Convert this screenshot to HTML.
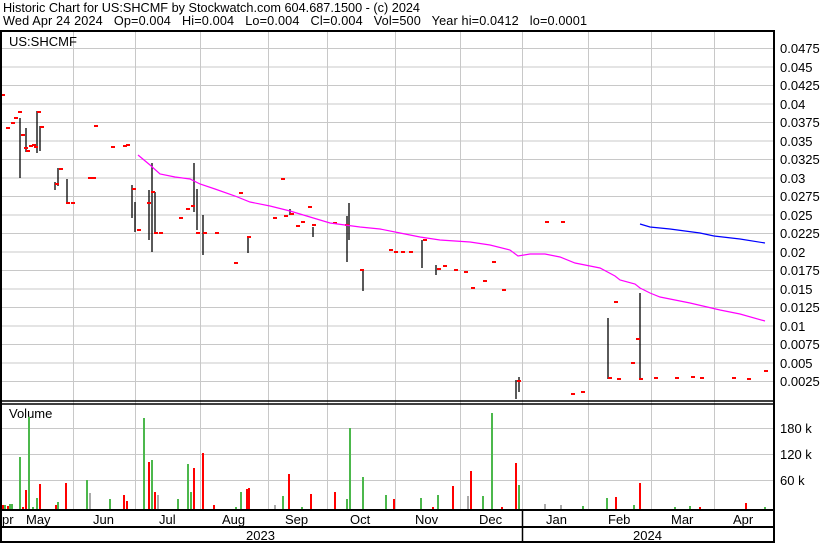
<!DOCTYPE html>
<html><head><meta charset="utf-8"><style>
html,body{margin:0;padding:0;background:#fff;width:830px;height:543px;overflow:hidden}
svg{display:block;font-family:"Liberation Sans",sans-serif}
.pre{white-space:pre}
</style></head><body>
<svg width="830" height="543" viewBox="0 0 830 543" xmlns="http://www.w3.org/2000/svg">
<rect width="830" height="543" fill="#fff"/>
<text x="3" y="12" font-size="12.7" textLength="417" lengthAdjust="spacingAndGlyphs">Historic Chart for US:SHCMF by Stockwatch.com 604.687.1500 - (c) 2024</text>
<text x="3" y="25" font-size="12.7" class="pre" xml:space="preserve" textLength="584" lengthAdjust="spacing">Wed Apr 24 2024   Op=0.004   Hi=0.004   Lo=0.004   Cl=0.004   Vol=500   Year hi=0.0412   lo=0.0001</text>
<g stroke="#c8c8c8" stroke-width="1">
<line x1="73.5" y1="31" x2="73.5" y2="509"/><line x1="135.5" y1="31" x2="135.5" y2="509"/>
<line x1="200.5" y1="31" x2="200.5" y2="509"/><line x1="268.5" y1="31" x2="268.5" y2="509"/>
<line x1="327.5" y1="31" x2="327.5" y2="509"/><line x1="395.5" y1="31" x2="395.5" y2="509"/>
<line x1="460.5" y1="31" x2="460.5" y2="509"/><line x1="522.5" y1="31" x2="522.5" y2="509"/>
<line x1="588.5" y1="31" x2="588.5" y2="509"/><line x1="651.5" y1="31" x2="651.5" y2="509"/>
<line x1="714.5" y1="31" x2="714.5" y2="509"/>
<line x1="0" x2="774" y1="48.5" y2="48.5"/><line x1="0" x2="774" y1="67" y2="67"/><line x1="0" x2="774" y1="85.5" y2="85.5"/><line x1="0" x2="774" y1="104" y2="104"/><line x1="0" x2="774" y1="122.5" y2="122.5"/><line x1="0" x2="774" y1="141" y2="141"/><line x1="0" x2="774" y1="159.5" y2="159.5"/><line x1="0" x2="774" y1="178" y2="178"/><line x1="0" x2="774" y1="196.5" y2="196.5"/><line x1="0" x2="774" y1="215" y2="215"/><line x1="0" x2="774" y1="233.5" y2="233.5"/><line x1="0" x2="774" y1="252" y2="252"/><line x1="0" x2="774" y1="270.5" y2="270.5"/><line x1="0" x2="774" y1="289" y2="289"/><line x1="0" x2="774" y1="307.5" y2="307.5"/><line x1="0" x2="774" y1="326" y2="326"/><line x1="0" x2="774" y1="344.5" y2="344.5"/><line x1="0" x2="774" y1="363" y2="363"/><line x1="0" x2="774" y1="381.5" y2="381.5"/>
<line x1="0" x2="774" y1="428.5" y2="428.5"/><line x1="0" x2="774" y1="454.5" y2="454.5"/><line x1="0" x2="774" y1="480.5" y2="480.5"/>
</g>
<rect x="2" y="33" width="70" height="15" fill="#fff"/>
<rect x="2" y="405" width="55" height="15" fill="#fff"/>
<text x="9" y="46" font-size="13">US:SHCMF</text>
<text x="9" y="418" font-size="13">Volume</text>
<g font-size="13">
<text x="780" y="53">0.0475</text><text x="780" y="72">0.045</text><text x="780" y="90">0.0425</text><text x="780" y="109">0.04</text><text x="780" y="127">0.0375</text><text x="780" y="146">0.035</text><text x="780" y="164">0.0325</text><text x="780" y="183">0.03</text><text x="780" y="201">0.0275</text><text x="780" y="220">0.025</text><text x="780" y="238">0.0225</text><text x="780" y="257">0.02</text><text x="780" y="275">0.0175</text><text x="780" y="294">0.015</text><text x="780" y="312">0.0125</text><text x="780" y="331">0.01</text><text x="780" y="349">0.0075</text><text x="780" y="368">0.005</text><text x="780" y="386">0.0025</text>
<text x="780" y="433">180 k</text><text x="780" y="459">120 k</text><text x="780" y="485">60 k</text>
</g>
<g stroke="#000" stroke-width="1.3">
<line x1="20" y1="118" x2="20" y2="178"/><line x1="26" y1="128" x2="26" y2="152"/><line x1="37" y1="111" x2="37" y2="153"/><line x1="40" y1="126" x2="40" y2="151"/><line x1="55" y1="182" x2="55" y2="190"/><line x1="58" y1="168" x2="58" y2="186"/><line x1="67" y1="179" x2="67" y2="204"/><line x1="132" y1="185" x2="132" y2="218"/><line x1="135" y1="202" x2="135" y2="232"/><line x1="149" y1="190" x2="149" y2="240"/><line x1="152" y1="163" x2="152" y2="252"/><line x1="155" y1="192" x2="155" y2="232"/><line x1="194" y1="163" x2="194" y2="212"/><line x1="197" y1="189" x2="197" y2="230"/><line x1="203" y1="215" x2="203" y2="255"/><line x1="248" y1="237" x2="248" y2="253"/><line x1="290" y1="209" x2="290" y2="215"/><line x1="313" y1="227" x2="313" y2="237"/><line x1="347" y1="216" x2="347" y2="262"/><line x1="349" y1="203" x2="349" y2="240"/><line x1="363" y1="269" x2="363" y2="291"/><line x1="422" y1="240" x2="422" y2="268"/><line x1="436" y1="265" x2="436" y2="275"/><line x1="516" y1="380" x2="516" y2="399"/><line x1="519" y1="377" x2="519" y2="392"/><line x1="608" y1="318" x2="608" y2="379"/><line x1="640" y1="293" x2="640" y2="379"/>
</g>
<g fill="#f00">
<rect x="1" y="94" width="4" height="2"/><rect x="6" y="127" width="4" height="2"/><rect x="11" y="122" width="4" height="2"/><rect x="14" y="117" width="4" height="2"/><rect x="18" y="111" width="4" height="2"/><rect x="21" y="134" width="4" height="2"/><rect x="24" y="147" width="4" height="2"/><rect x="26" y="150" width="4" height="2"/><rect x="29" y="145" width="4" height="2"/><rect x="32" y="144" width="4" height="2"/><rect x="34" y="146" width="4" height="2"/><rect x="37" y="111" width="4" height="2"/><rect x="40" y="126" width="4" height="2"/><rect x="55" y="183" width="4" height="2"/><rect x="59" y="168" width="4" height="2"/><rect x="66" y="202" width="4" height="2"/><rect x="71" y="202" width="4" height="2"/><rect x="88" y="177" width="4" height="2"/><rect x="92" y="177" width="4" height="2"/><rect x="94" y="125" width="4" height="2"/><rect x="111" y="146" width="4" height="2"/><rect x="123" y="145" width="4" height="2"/><rect x="126" y="144" width="4" height="2"/><rect x="132" y="188" width="4" height="2"/><rect x="137" y="229" width="4" height="2"/><rect x="147" y="202" width="4" height="2"/><rect x="151" y="191" width="4" height="2"/><rect x="154" y="232" width="4" height="2"/><rect x="159" y="232" width="4" height="2"/><rect x="179" y="217" width="4" height="2"/><rect x="186" y="208" width="4" height="2"/><rect x="191" y="205" width="4" height="2"/><rect x="196" y="232" width="4" height="2"/><rect x="203" y="232" width="4" height="2"/><rect x="215" y="232" width="4" height="2"/><rect x="234" y="262" width="4" height="2"/><rect x="239" y="192" width="4" height="2"/><rect x="247" y="236" width="4" height="2"/><rect x="273" y="217" width="4" height="2"/><rect x="281" y="178" width="4" height="2"/><rect x="284" y="215" width="4" height="2"/><rect x="290" y="213" width="4" height="2"/><rect x="296" y="225" width="4" height="2"/><rect x="301" y="221" width="4" height="2"/><rect x="308" y="206" width="4" height="2"/><rect x="312" y="224" width="4" height="2"/><rect x="333" y="222" width="4" height="2"/><rect x="345" y="224" width="4" height="2"/><rect x="360" y="269" width="4" height="2"/><rect x="389" y="249" width="4" height="2"/><rect x="394" y="251" width="4" height="2"/><rect x="401" y="251" width="4" height="2"/><rect x="409" y="251" width="4" height="2"/><rect x="423" y="239" width="4" height="2"/><rect x="437" y="268" width="4" height="2"/><rect x="443" y="265" width="4" height="2"/><rect x="454" y="269" width="4" height="2"/><rect x="464" y="271" width="4" height="2"/><rect x="471" y="287" width="4" height="2"/><rect x="483" y="280" width="4" height="2"/><rect x="492" y="261" width="4" height="2"/><rect x="502" y="289" width="4" height="2"/><rect x="517" y="380" width="4" height="2"/><rect x="545" y="221" width="4" height="2"/><rect x="561" y="221" width="4" height="2"/><rect x="571" y="393" width="4" height="2"/><rect x="581" y="391" width="4" height="2"/><rect x="608" y="377" width="4" height="2"/><rect x="614" y="301" width="4" height="2"/><rect x="617" y="378" width="4" height="2"/><rect x="631" y="362" width="4" height="2"/><rect x="636" y="338" width="4" height="2"/><rect x="639" y="378" width="4" height="2"/><rect x="654" y="377" width="4" height="2"/><rect x="675" y="377" width="4" height="2"/><rect x="691" y="376" width="4" height="2"/><rect x="700" y="377" width="4" height="2"/><rect x="732" y="377" width="4" height="2"/><rect x="747" y="378" width="4" height="2"/><rect x="764" y="370" width="4" height="2"/>
</g>
<polyline fill="none" stroke="#f0f" stroke-width="1.2" points="138,155 150,165 160,174 175,177 190,179 200,184 215,189 235,196 250,202 270,206 290,211 310,217 330,223 360,227 380,229 400,233 420,237 440,240 470,242 490,245 510,250 518,256 530,254 545,254 560,257 575,263 600,268 615,276 620,280 635,284 640,288 650,293 660,297 690,303 720,310 740,314 765,321"/>
<polyline fill="none" stroke="#00f" stroke-width="1.2" points="640,224 650,227 670,229 700,233 714,236 740,239 765,243"/>
<g fill="#f00">
<rect x="2" y="505" width="2" height="4"/><rect x="7" y="506" width="2" height="3"/><rect x="22" y="507" width="2" height="2"/><rect x="25" y="490" width="2" height="19"/><rect x="39" y="484" width="2" height="25"/><rect x="55" y="505" width="2" height="4"/><rect x="65" y="483" width="2" height="26"/><rect x="123" y="495" width="2" height="14"/><rect x="126" y="501" width="2" height="8"/><rect x="148" y="462" width="2" height="47"/><rect x="154" y="492" width="2" height="17"/><rect x="193" y="468" width="2" height="41"/><rect x="202" y="453" width="2" height="56"/><rect x="213" y="505" width="2" height="4"/><rect x="246" y="489" width="2" height="20"/><rect x="248" y="488" width="2" height="21"/><rect x="288" y="474" width="2" height="35"/><rect x="310" y="494" width="2" height="15"/><rect x="334" y="492" width="2" height="17"/><rect x="393" y="499" width="2" height="10"/><rect x="432" y="507" width="2" height="2"/><rect x="452" y="486" width="2" height="23"/><rect x="470" y="471" width="2" height="38"/><rect x="501" y="507" width="2" height="2"/><rect x="515" y="463" width="2" height="46"/><rect x="615" y="497" width="2" height="12"/><rect x="639" y="483" width="2" height="26"/><rect x="699" y="507" width="2" height="2"/><rect x="745" y="503" width="2" height="6"/>
</g>
<g fill="#4cb84c">
<rect x="4" y="505" width="2" height="4"/><rect x="9" y="504" width="2" height="5"/><rect x="11" y="504" width="2" height="5"/><rect x="19" y="457" width="2" height="52"/><rect x="28" y="417" width="2" height="92"/><rect x="32" y="507" width="2" height="2"/><rect x="36" y="498" width="2" height="11"/><rect x="57" y="502" width="2" height="7"/><rect x="86" y="480" width="2" height="29"/><rect x="109" y="499" width="2" height="10"/><rect x="143" y="418" width="2" height="91"/><rect x="151" y="460" width="2" height="49"/><rect x="177" y="499" width="2" height="10"/><rect x="187" y="464" width="2" height="45"/><rect x="190" y="492" width="2" height="17"/><rect x="235" y="507" width="2" height="2"/><rect x="240" y="492" width="2" height="17"/><rect x="282" y="496" width="2" height="13"/><rect x="301" y="507" width="2" height="2"/><rect x="346" y="499" width="2" height="10"/><rect x="349" y="428" width="2" height="81"/><rect x="362" y="477" width="2" height="32"/><rect x="385" y="495" width="2" height="14"/><rect x="420" y="498" width="2" height="11"/><rect x="437" y="495" width="2" height="14"/><rect x="482" y="496" width="2" height="13"/><rect x="491" y="413" width="2" height="96"/><rect x="518" y="485" width="2" height="24"/><rect x="582" y="506" width="2" height="3"/><rect x="606" y="498" width="2" height="11"/><rect x="633" y="505" width="2" height="4"/><rect x="674" y="507" width="2" height="2"/><rect x="689" y="506" width="2" height="3"/><rect x="764" y="507" width="2" height="2"/>
</g>
<g fill="#aaa">
<rect x="89" y="493" width="2" height="16"/><rect x="157" y="495" width="2" height="14"/><rect x="274" y="505" width="2" height="4"/><rect x="467" y="496" width="2" height="13"/><rect x="544" y="504" width="2" height="5"/><rect x="560" y="505" width="2" height="4"/>
</g>
<g stroke="#000" fill="none">
<line x1="0" y1="31" x2="775" y2="31" stroke-width="2"/>
<line x1="1" y1="31" x2="1" y2="542" stroke-width="2"/>
<line x1="774" y1="31" x2="774" y2="542" stroke-width="2"/>
<line x1="0" y1="401" x2="775" y2="401" stroke-width="1.5"/>
<line x1="0" y1="404" x2="775" y2="404" stroke-width="1.5"/>
<line x1="0" y1="510" x2="775" y2="510" stroke-width="2"/>
<line x1="0" y1="527" x2="775" y2="527" stroke-width="2"/>
<line x1="0" y1="542" x2="775" y2="542" stroke-width="2"/>
<line x1="522.5" y1="510" x2="522.5" y2="542" stroke-width="1.5"/>
</g>
<g font-size="13">
<text x="2" y="524">pr</text><text x="26" y="524">May</text><text x="93" y="524">Jun</text><text x="159" y="524">Jul</text><text x="222" y="524">Aug</text><text x="285" y="524">Sep</text><text x="350" y="524">Oct</text><text x="415" y="524">Nov</text><text x="479" y="524">Dec</text><text x="546" y="524">Jan</text><text x="608" y="524">Feb</text><text x="671" y="524">Mar</text><text x="733" y="524">Apr</text>
<text x="246" y="540">2023</text><text x="633" y="540">2024</text>
</g>
</svg>
</body></html>
